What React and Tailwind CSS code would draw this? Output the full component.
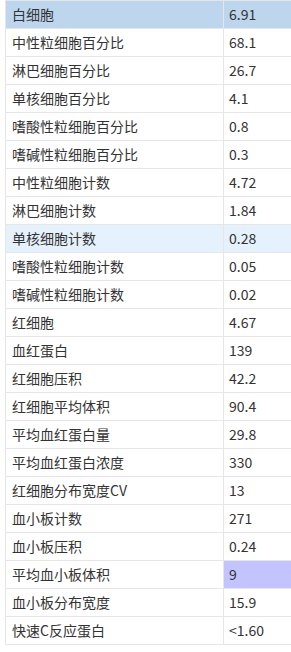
const rows = [
  ['白细胞', '6.91', 'head'],
  ['中性粒细胞百分比', '68.1'],
  ['淋巴细胞百分比', '26.7'],
  ['单核细胞百分比', '4.1'],
  ['嗜酸性粒细胞百分比', '0.8'],
  ['嗜碱性粒细胞百分比', '0.3'],
  ['中性粒细胞计数', '4.72'],
  ['淋巴细胞计数', '1.84'],
  ['单核细胞计数', '0.28', 'hover'],
  ['嗜酸性粒细胞计数', '0.05'],
  ['嗜碱性粒细胞计数', '0.02'],
  ['红细胞', '4.67'],
  ['血红蛋白', '139'],
  ['红细胞压积', '42.2'],
  ['红细胞平均体积', '90.4'],
  ['平均血红蛋白量', '29.8'],
  ['平均血红蛋白浓度', '330'],
  ['红细胞分布宽度CV', '13'],
  ['血小板计数', '271'],
  ['血小板压积', '0.24'],
  ['平均血小板体积', '9', 'cell'],
  ['血小板分布宽度', '15.9'],
  ['快速C反应蛋白', '<1.60'],
];

export default function App() {
  return (
    <div className="w-[291px] h-[652px] overflow-hidden bg-white pl-[5px] text-[14px] text-[#333] font-['Noto_Sans_CJK_SC','Noto_Sans',sans-serif]">
      <div className="w-[330px] border-l border-t border-[#e6e6e6]">
        {rows.map(([name, value, mark]) => (
          <div
            key={name}
            className={
              'flex h-[28px] border-b border-[#e6e6e6] ' +
              (mark === 'head' ? 'bg-[#bdd6ee]' : mark === 'hover' ? 'bg-[#e5f1fc]' : '')
            }
          >
            <div className="w-[218px] shrink-0 border-r border-[#e6e6e6] pl-[6px] flex items-center">
              {name}
            </div>
            <div className={'flex-1 pl-[5px] flex items-center ' + (mark === 'cell' ? 'bg-[#c3c3ff]' : '')}>
              {value}
            </div>
          </div>
        ))}
      </div>
    </div>
  );
}
